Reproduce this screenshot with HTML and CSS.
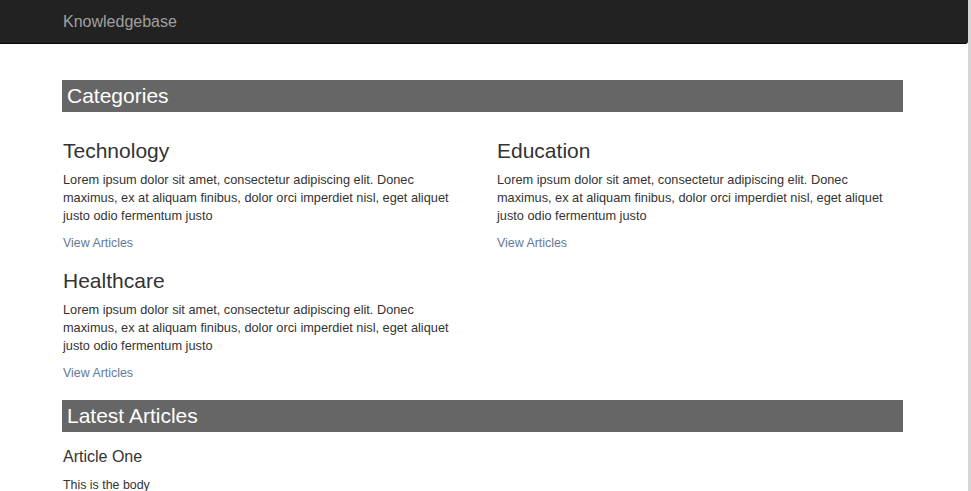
FILE: index.html
```html
<!DOCTYPE html>
<html>
<head>
<meta charset="utf-8">
<link rel="stylesheet" href="styles.css">
</head>
<body>
<nav class="navbar">
  <div class="nav-inner"><span class="brand">Knowledgebase</span></div>
</nav>
<main class="container">
  <h2 class="section-bar">Categories</h2>
  <div class="grid">
    <div class="cat">
      <h3>Technology</h3>
      <p>Lorem ipsum dolor sit amet, consectetur adipiscing elit. Donec maximus, ex at aliquam finibus, dolor orci imperdiet nisl, eget aliquet justo odio fermentum justo</p>
      <a class="link" href="#">View Articles</a>
    </div>
    <div class="cat">
      <h3>Education</h3>
      <p>Lorem ipsum dolor sit amet, consectetur adipiscing elit. Donec maximus, ex at aliquam finibus, dolor orci imperdiet nisl, eget aliquet justo odio fermentum justo</p>
      <a class="link" href="#">View Articles</a>
    </div>
    <div class="cat">
      <h3>Healthcare</h3>
      <p>Lorem ipsum dolor sit amet, consectetur adipiscing elit. Donec maximus, ex at aliquam finibus, dolor orci imperdiet nisl, eget aliquet justo odio fermentum justo</p>
      <a class="link" href="#">View Articles</a>
    </div>
  </div>
  <h2 class="section-bar latest">Latest Articles</h2>
  <div class="article">
    <h4>Article One</h4>
    <p>This is the body</p>
  </div>
</main>
</body>
</html>
```
FILE: styles.css
```css
html, body {
  margin: 0;
  padding: 0;
}
body {
  font-family: "Liberation Sans", Arial, sans-serif;
  font-size: 12.4px;
  line-height: 18px;
  color: #333;
  background: #fff;
  width: 968px;
  border-right: 3px solid #d6d6d6;
  min-height: 491px;
  box-sizing: content-box;
}
.navbar {
  background: #222;
  height: 43px;
  border-bottom: 1px solid #080808;
  border-bottom-right-radius: 3px;
}
.nav-inner {
  padding-left: 63px;
  line-height: 43px;
}
.brand {
  color: #a0a0a0;
  font-size: 16px;
}
.container {
  width: 840px;
  margin-left: 63px;
  padding-top: 36px;
}
.section-bar {
  margin: 0;
  background: #666;
  color: #fff;
  font-size: 21px;
  font-weight: normal;
  line-height: 32px;
  height: 32px;
  padding-left: 5px;
  margin-left: -1px;
}
.grid {
  display: grid;
  grid-template-columns: 434px 406px;
  padding-top: 27px;
  row-gap: 17px;
}
.cat h3 {
  margin: 0 0 9px 0;
  font-size: 21px;
  font-weight: normal;
  line-height: 23px;
  color: #333;
}
.cat p {
  margin: 0 0 9px 0;
  width: 396px;
  font-size: 12.75px;
}
.link {
  display: block;
  color: #647a99;
  text-decoration: none;
}
.latest {
  margin-top: 18px;
}
.article {
  padding-top: 16px;
}
.article h4 {
  margin: 0 0 10px 0;
  font-size: 16px;
  font-weight: normal;
  line-height: 18px;
  color: #333;
}
.article p {
  margin: 0;
}
```
